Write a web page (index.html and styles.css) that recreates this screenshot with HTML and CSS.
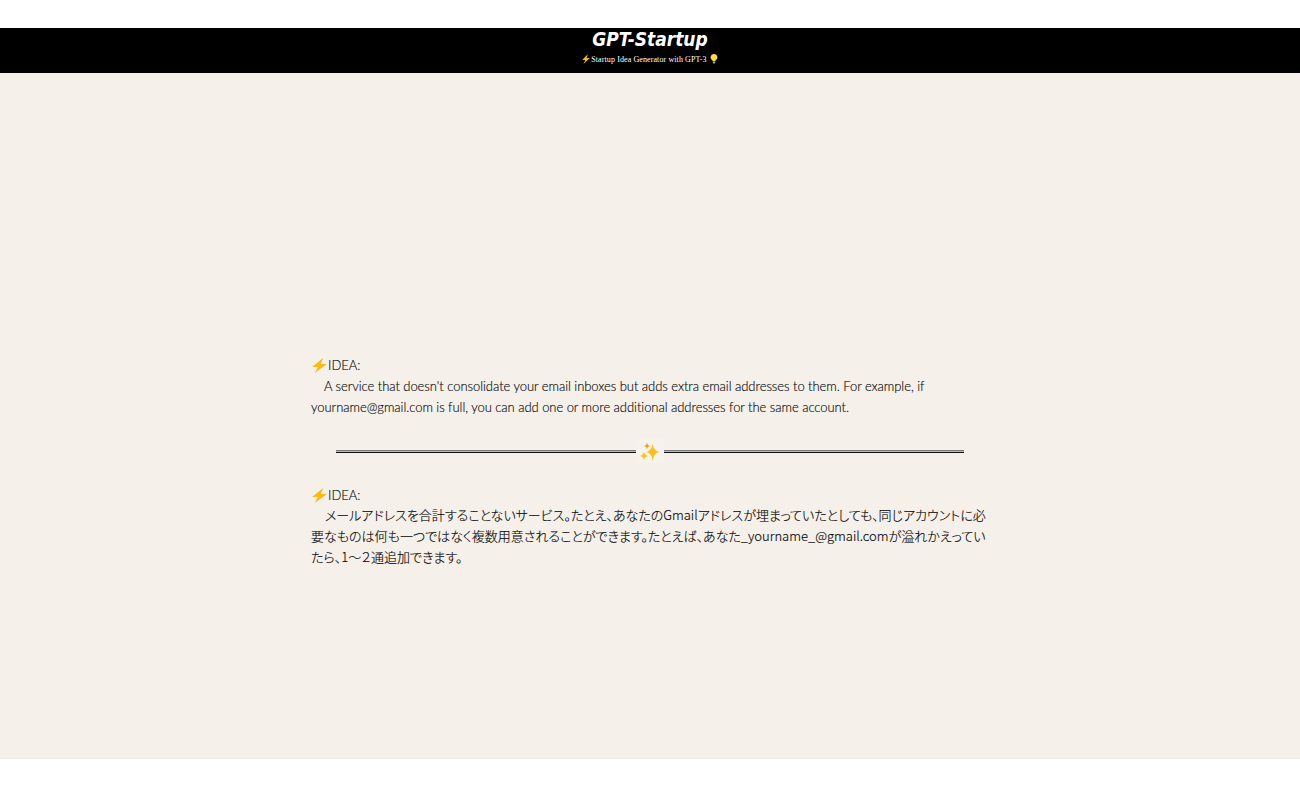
FILE: index.html
```html
<!DOCTYPE html>
<html lang="en">
<head>
<meta charset="utf-8">
<title>GPT-Startup</title>
<link rel="stylesheet" href="styles.css">
</head>
<body>
<header class="hero">
  <h1 class="title">GPT-Startup</h1>
  <p class="tagline"><svg class="icon-sm" viewBox="0 0 16 16"><path fill="#f9b916" d="M11 0 2 9.500h5L4 16l10-9.500H9z"/></svg>Startup Idea Generator with GPT-3 <svg class="icon-sm" viewBox="0 0 16 16"><path fill="#ffd94f" d="M8 0a5.300 5.300 0 0 0-3 9.700c.5.400.7 1 .8 1.800h4.400c.1-.8.300-1.400.8-1.800A5.300 5.300 0 0 0 8 0z"/><rect fill="#9aa7b5" x="6" y="12" width="4" height="3" rx="1"/></svg></p>
</header>
<main class="content">
  <article class="idea">
    <div class="label"><svg class="bolt" viewBox="0 0 16 16"><path fill="#f9b916" d="M11.500 1 1 9.500h5.500L3.500 15 15 6.500H9.200z"/></svg>IDEA:</div>
    <div class="body en">A service that doesn't consolidate your email inboxes but adds extra email addresses to them. For example, if yourname@gmail.com is full, you can add one or more additional addresses for the same account.</div>
  </article>
  <div class="divider">
    <span class="rule"></span>
    <span class="spark"><svg viewBox="0 0 20 20"><path fill="#fbbf1f" d="M12.700 3Q13.700 9.800 19 11Q13.700 12.200 12.700 19.500Q11.700 12.200 6.400 11Q11.700 9.800 12.700 3z"/><path fill="#f5a015" d="M7 1.800Q7.400 4.600 10 5Q7.400 5.400 7 8.200Q6.600 5.400 4 5Q6.600 4.600 7 1.800z"/><path fill="#fbbf1f" d="M4 10.800Q4.600 14.400 8.200 15Q4.600 15.600 4 19.200Q3.400 15.600 -.2 15Q3.400 14.400 4 10.800z"/></svg></span>
    <span class="rule"></span>
  </div>
  <article class="idea">
    <div class="label"><svg class="bolt" viewBox="0 0 16 16"><path fill="#f9b916" d="M11.500 1 1 9.500h5.500L3.500 15 15 6.500H9.200z"/></svg>IDEA:</div>
    <div class="body ja" lang="ja">メールアドレスを合計することないサービス。たとえ、あなたのGmailアドレスが埋まっていたとしても、同じアカウントに必要なものは何も一つではなく複数用意されることができます。たとえば、あなた_yourname_@gmail.comが溢れかえっていたら、1～２通追加できます。</div>
  </article>
</main>
</body>
</html>
```
FILE: styles.css
```css
html, body {
  margin: 0;
  padding: 0;
  background: #fff;
}
body {
  height: 788px;
  padding-top: 28px;
  box-sizing: border-box;
  overflow: hidden;
  font-family: "Lato", "Noto Sans CJK JP", sans-serif;
  color: #000;
}
.hero {
  height: 45px;
  background: #000;
  color: #fff;
  text-align: center;
  overflow: hidden;
}
.title {
  margin: 0;
  height: 23px;
  font-family: "DejaVu Sans", sans-serif;
  font-stretch: condensed;
  font-style: italic;
  font-weight: 700;
  font-size: 19px;
  line-height: 23px;
  letter-spacing: 0;
}
.tagline {
  margin: 2px 0 0;
  font-family: "Liberation Serif", serif;
  font-weight: 400;
  font-size: 8px;
  line-height: 13px;
  letter-spacing: 0.1px;
  color: #fff;
}
.icon-sm {
  width: 10px;
  height: 10px;
  vertical-align: -2px;
}
.content {
  height: 686px;
  padding-top: 91px;
  background: #f5f0ea;
  border-bottom: 1px solid #ece8e2;
  box-sizing: border-box;
  display: flex;
  flex-direction: column;
  align-items: center;
  justify-content: center;
}
.idea {
  width: 678px;
  font-size: 13px;
  line-height: 21px;
  font-weight: 300;
}
.label {
  display: flex;
  align-items: center;
  -webkit-text-stroke: 0.15px #222;
}
.bolt {
  width: 17px;
  height: 17px;
}
.body {
  text-indent: 13px;
}
.en {
  letter-spacing: -0.05px;
  -webkit-text-stroke: 0.15px #222;
}
.ja {
  margin-top: -2px;
  font-family: "Noto Sans CJK JP", sans-serif;
  font-feature-settings: "palt";
  font-weight: 300;
  -webkit-text-stroke: 0.15px #222;
  text-indent: 14px;
}
.divider {
  width: 628px;
  height: 24px;
  margin: 21px 0 22px;
  display: flex;
  align-items: center;
}
.rule {
  flex: 1;
  height: 3px;
  box-sizing: border-box;
  border-top: 1px solid #777;
  border-bottom: 1px solid #111;
  background: #bbb;
}
.spark {
  width: 28px;
  height: 24px;
  background: #f6f2ec;
  display: flex;
  align-items: center;
  justify-content: center;
}
.spark svg {
  width: 20px;
  height: 20px;
  overflow: visible;
}
```
